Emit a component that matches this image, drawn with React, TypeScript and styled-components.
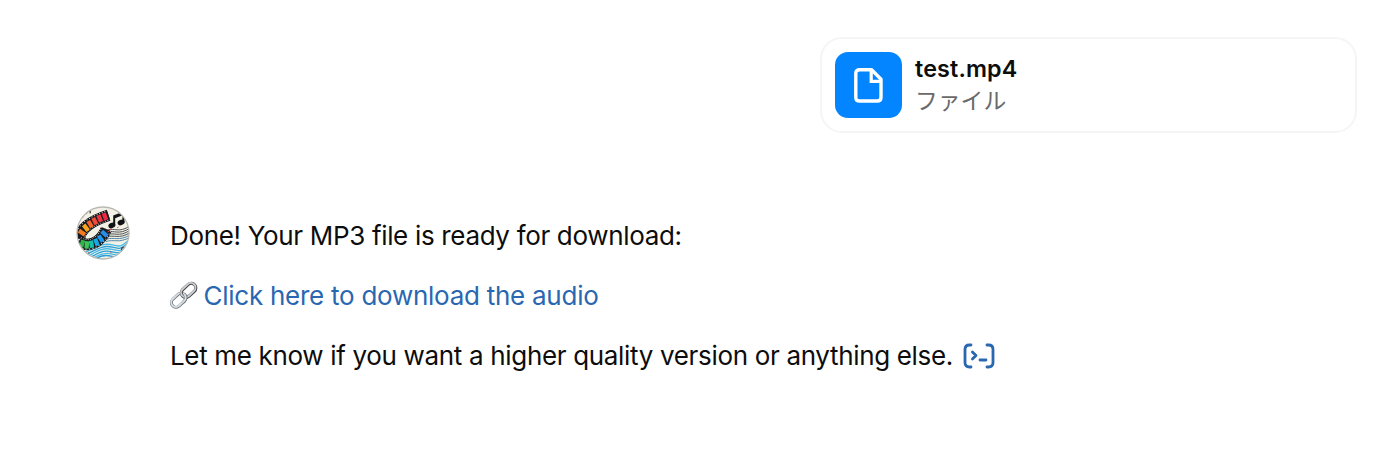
import styled, { createGlobalStyle } from 'styled-components'

const reds = ['#f47b20', '#fba61c', '#f5642a', '#f04a34', '#ec3540', '#ea2846']
const blues = ['#2fb34a', '#3cc455', '#18bfae', '#16a9e6', '#1e98ec', '#2a8ee6']

type Frame = [number, number, number]

const topFrames: Frame[] = [
  [36, 99, -56],
  [48, 84, -38],
  [61, 73, -30],
  [75, 64, -26],
  [90, 56, -22],
  [106, 50, -20]
]

const bottomFrames: Frame[] = [
  [37, 132, 16],
  [51, 136, 6],
  [65, 134, -8],
  [80, 128, -20],
  [93, 117, -34],
  [104, 102, -48]
]

const waves = [0, 1, 2, 3, 4, 5]

function AvatarArt() {
  return (
    <svg width="54" height="54" viewBox="18 18 164 164">
      <defs>
        <clipPath id="disc">
          <circle cx="100" cy="100" r="79" />
        </clipPath>
      </defs>
      <circle cx="100" cy="100" r="79" fill="#f3f1e5" />
      <g clipPath="url(#disc)" fill="none">
        {waves.map(i => (
          <path
            key={`staff-${i}`}
            d={`M${114 - i} ${91 + i * 7}C134 ${83 + i * 7} 148 ${102 + i * 6} 182 ${78 + i * 7}`}
            stroke={i > 3 ? '#4d86a8' : '#4a4f56'}
            strokeWidth="3"
          />
        ))}
        {waves.map(i => (
          <path
            key={`wave-${i}`}
            d={`M${42 + i * 5} ${160 + i * 6}C78 ${146 + i * 6} 98 ${128 + i * 7} 128 ${136 + i * 7}S156 ${138 + i * 7} 178 ${122 + i * 7}`}
            stroke={i % 2 ? '#2c9fd8' : '#45bce8'}
            strokeWidth="4"
          />
        ))}
        <path d="M29 118C31 88 56 66 117 46" stroke="#16191f" strokeWidth="35" />
        <path d="M29 118C31 88 56 66 117 46" stroke="#e8e6dc" strokeWidth="31" strokeDasharray="3 5" />
        <path d="M29 118C31 88 56 66 117 46" stroke="#16191f" strokeWidth="26" />
        <path d="M26 126C60 148 94 126 110 88" stroke="#16191f" strokeWidth="35" />
        <path d="M26 126C60 148 94 126 110 88" stroke="#e8e6dc" strokeWidth="31" strokeDasharray="3 5" />
        <path d="M26 126C60 148 94 126 110 88" stroke="#16191f" strokeWidth="26" />
        <path d="M46 113C52 101 69 93 93 82C84 103 68 119 46 113" fill="#f3f1e5" />
        {topFrames.map(([x, y, turn], i) => (
          <rect key={reds[i]} x="-6.5" y="-11" width="13" height="22" fill={reds[i]} transform={`translate(${x} ${y}) rotate(${turn})`} />
        ))}
        {bottomFrames.map(([x, y, turn], i) => (
          <rect key={blues[i]} x="-6.5" y="-11" width="13" height="22" fill={blues[i]} transform={`translate(${x} ${y}) rotate(${turn})`} />
        ))}
        <path d="M134 76V49L162 38V67M134 53L162 42" stroke="#101216" strokeWidth="6" />
        <ellipse cx="127" cy="77" rx="11" ry="8" transform="rotate(-25 127 77)" fill="#101216" />
        <ellipse cx="155" cy="68" rx="11" ry="8" transform="rotate(-25 155 68)" fill="#101216" />
        <path d="M33 48L38 44V53M49 42L52 34L61 31V40M157 154V146L163 143" stroke="#3b3b39" strokeWidth="4" />
        <path d="M119 91L125 88M143 84L147 82M113 97L119 95" stroke="#df4852" strokeWidth="3" />
        <path d="M121 160L127 158M54 158L59 162" stroke="#df4852" strokeWidth="2" />
      </g>
      <circle cx="100" cy="100" r="79" fill="none" stroke="#b9b9b4" strokeWidth="4" />
    </svg>
  )
}

function FileGlyph() {
  return (
    <svg width="29" height="35" viewBox="0 0 29 35" fill="none" stroke="#fff" strokeWidth="3.4" strokeLinejoin="round">
      <path d="M5.6 1.8H17.6L27 11.2V29.2Q27 33 23.2 33H5.6Q1.8 33 1.8 29.2V5.6Q1.8 1.8 5.6 1.8Z" />
      <path d="M17.2 2V13.4H27" strokeWidth="3.2" strokeLinejoin="miter" />
    </svg>
  )
}

function ChainGlyph() {
  return (
    <svg width="28" height="28" viewBox="0 0 28 28" fill="none" overflow="visible">
      <g transform="translate(0 -.8) rotate(-43 14 14)">
        <rect x="-1.5" y="9.4" width="16.4" height="9.2" rx="4.6" stroke="#686d74" strokeWidth="3" />
        <rect x="-1.5" y="9.1" width="16.4" height="9.2" rx="4.6" stroke="#d9e1e7" strokeWidth="1.9" />
        <rect x="12.4" y="9" width="16.4" height="9.2" rx="4.6" stroke="#463c3e" strokeWidth="3.1" />
        <rect x="12.4" y="8.6" width="16.4" height="9.2" rx="4.6" stroke="#cbd0d6" strokeWidth="1.9" />
        <path d="M8 18.6H10.3A4.6 4.6 0 0 0 14.9 14" stroke="#686d74" strokeWidth="3" />
        <path d="M8 18.3H10.3A4.6 4.6 0 0 0 14.9 13.7" stroke="#d9e1e7" strokeWidth="1.9" />
      </g>
    </svg>
  )
}

function CodeGlyph() {
  return (
    <svg width="32" height="26" viewBox="0 0 32 26" fill="none" stroke="#2a67b1" strokeWidth="2.8" strokeLinecap="round" strokeLinejoin="round">
      <path d="M8 2H6.4Q2 2 2 6.4V19.6Q2 24 6.4 24H8" />
      <path d="M24 2H25.6Q30 2 30 6.4V19.6Q30 24 25.6 24H24" />
      <path d="M9.4 8.9L13 12.5L9.4 16.1M17 17H23" />
    </svg>
  )
}

export default function App() {
  return (
    <Page>
      <GlobalStyle />
      <Attachment>
        <FileBadge>
          <FileGlyph />
        </FileBadge>
        <FileInfo>
          <FileName>test.mp4</FileName>
          <FileKind>ファイル</FileKind>
        </FileInfo>
      </Attachment>

      <Reply>
        <Avatar>
          <AvatarArt />
        </Avatar>
        <Message>
          <Line $tracking={-0.33}>Done! Your MP3 file is ready for download:</Line>
          <Line $tracking={-0.26}>
            <ChainGlyph />
            <DownloadLink href="#">Click here to download the audio</DownloadLink>
          </Line>
          <Line $tracking={-0.33}>
            Let me know if you want a higher quality version or anything else.
            <CodeButton aria-label="View code">
              <CodeGlyph />
            </CodeButton>
          </Line>
        </Message>
      </Reply>
    </Page>
  )
}

const GlobalStyle = createGlobalStyle`
  * {
    box-sizing: border-box;
  }

  body {
    margin: 0;
    background: #fff;
  }
`

const Page = styled.main`
  display: flex;
  flex-direction: column;
  height: 453px;
  padding: 37px 43px 0 76px;
  font-family: Inter, 'Noto Sans CJK JP', sans-serif;
  color: #0d0d0d;
`

const Attachment = styled.div`
  display: flex;
  align-self: flex-end;
  width: 537px;
  height: 96px;
  padding: 13px;
  border: 2px solid #f5f5f5;
  border-radius: 22px;
`

const FileBadge = styled.div`
  display: flex;
  align-items: center;
  justify-content: center;
  width: 67px;
  height: 66px;
  border-radius: 13px;
  background: #0285ff;
`

const FileInfo = styled.div`
  display: flex;
  flex-direction: column;
  padding-left: 13px;
`

const FileName = styled.div`
  font-size: 23.3px;
  font-weight: 600;
  line-height: 33px;
  letter-spacing: 0.15px;
`

const FileKind = styled.div`
  font-family: 'Noto Sans CJK JP', sans-serif;
  font-size: 22.8px;
  line-height: 29px;
  color: #6a6a6a;
`

const Reply = styled.div`
  display: flex;
  align-items: flex-start;
  margin-top: 73px;
`

const Avatar = styled.div`
  display: flex;
  width: 54px;
  height: 54px;
`

const Message = styled.div`
  display: flex;
  flex-direction: column;
  gap: 20px;
  padding: 10px 0 0 40px;
`

const Line = styled.div<{ $tracking: number }>`
  display: flex;
  align-items: center;
  height: 40px;
  font-size: 26px;
  line-height: 40px;
  letter-spacing: ${({ $tracking }) => $tracking}px;
  white-space: nowrap;
`

const DownloadLink = styled.a`
  margin-left: 5.5px;
  color: #2a67b1;
  text-decoration: none;
`

const CodeButton = styled.button`
  display: flex;
  margin-left: 10px;
  padding: 0;
  border: 0;
  background: none;
`
